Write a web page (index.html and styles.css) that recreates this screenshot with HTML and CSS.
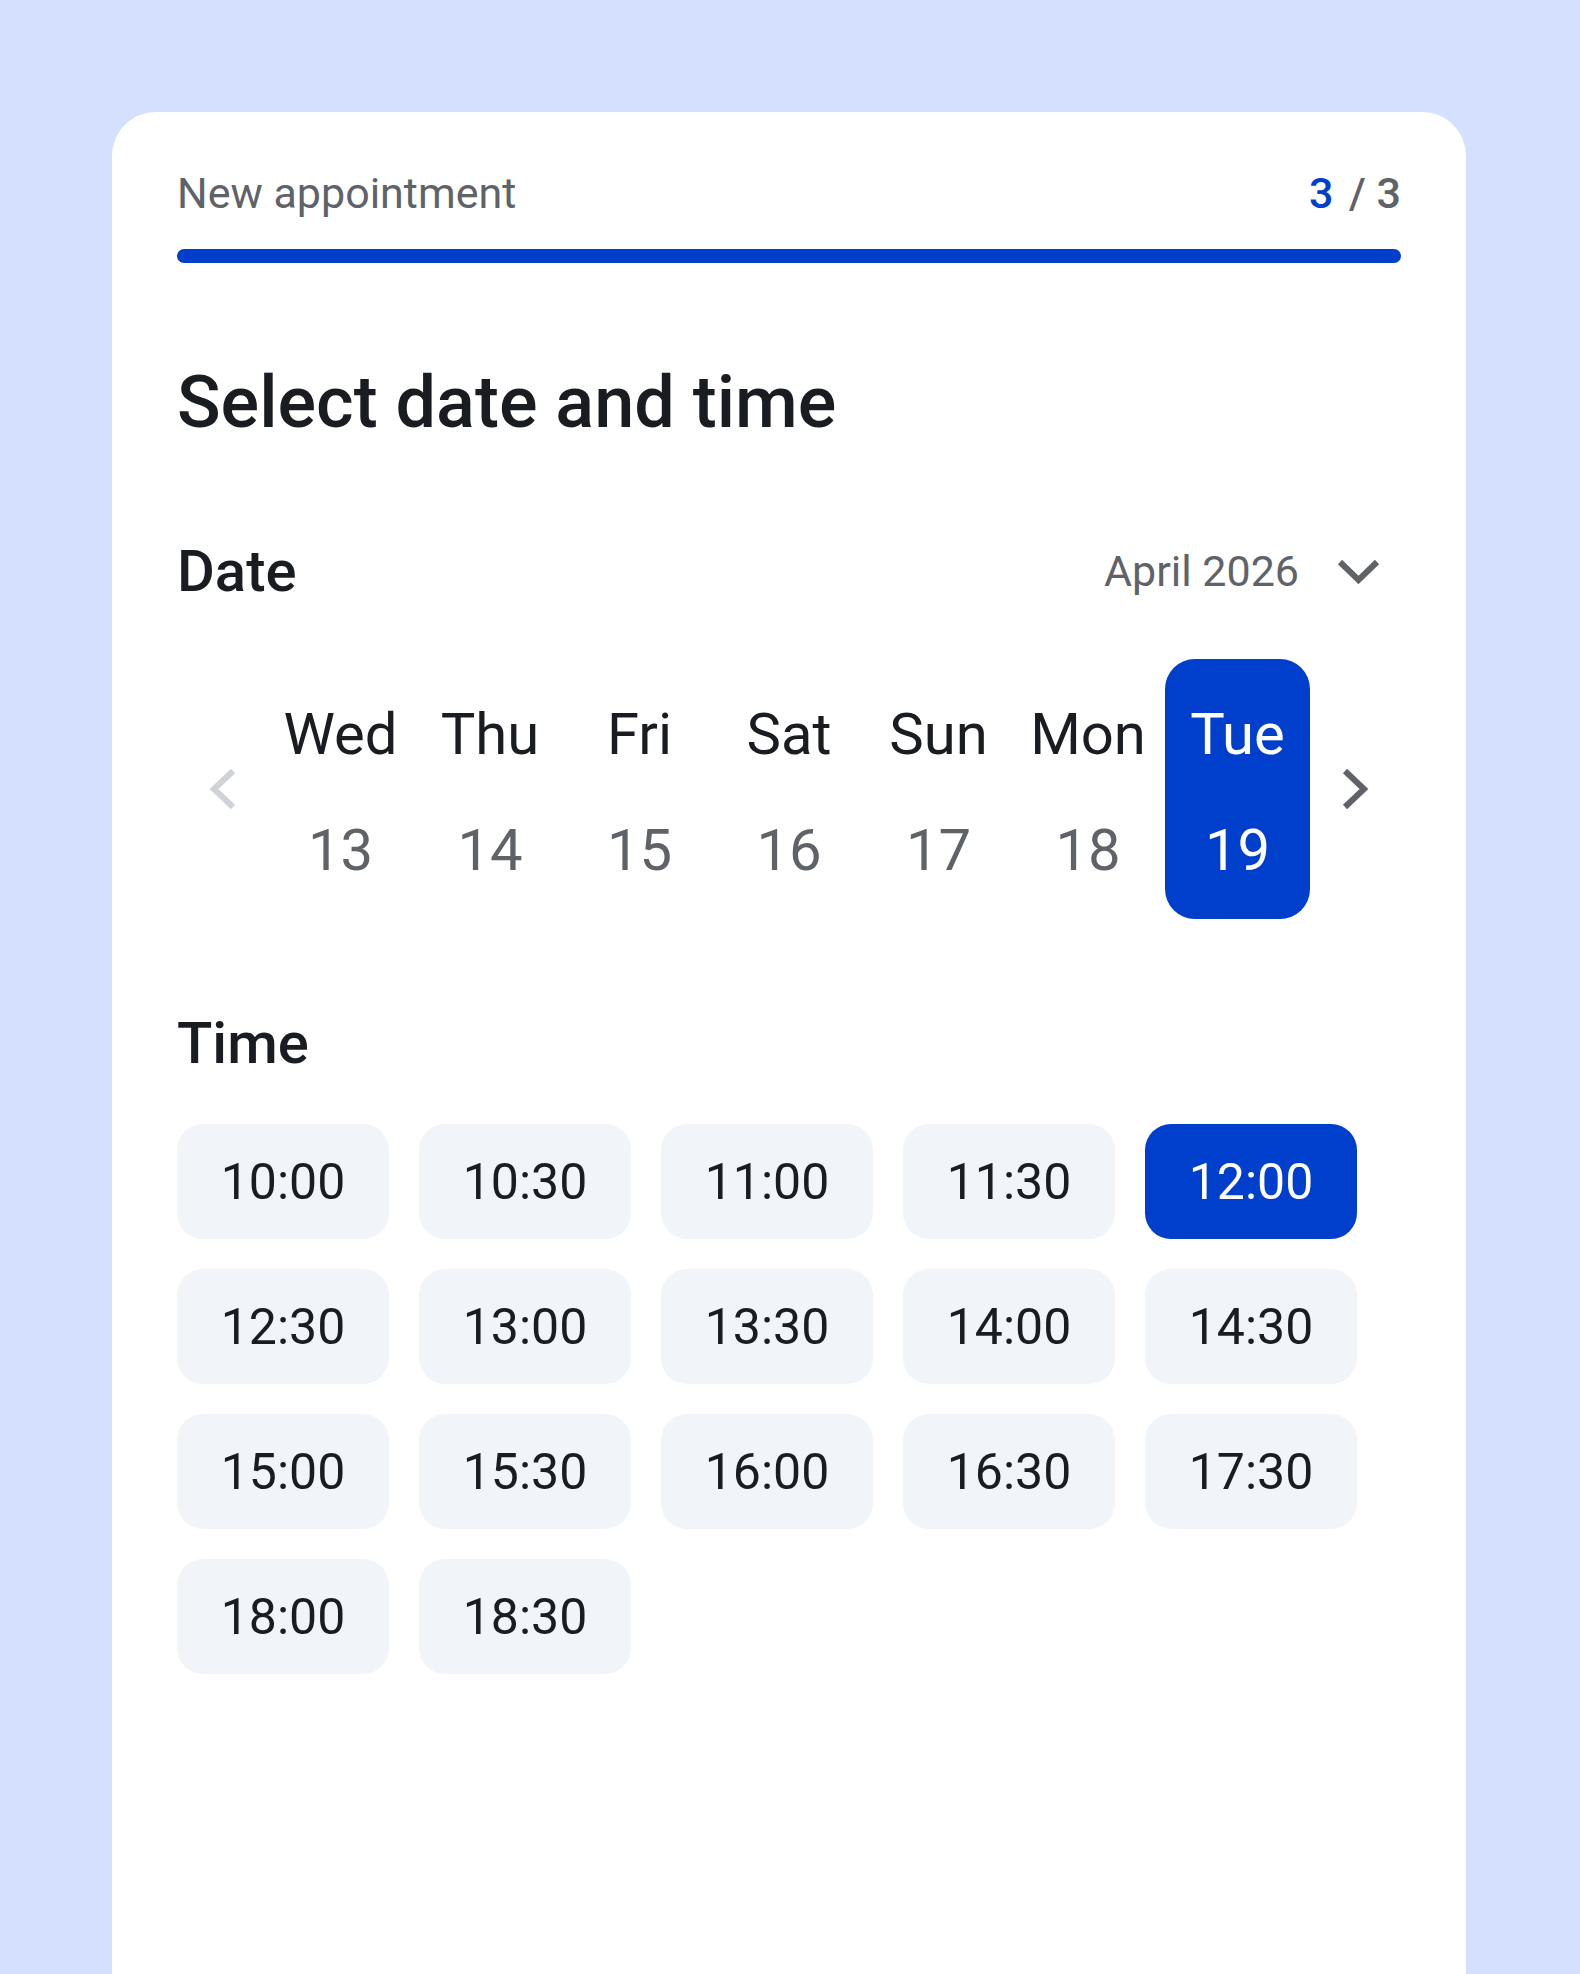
FILE: index.html
```html
<!DOCTYPE html>
<html lang="en">
<head>
    <meta charset="UTF-8">
    <meta name="viewport" content="width=device-width, initial-scale=1.0">
    <title>New appointment</title>
    <link rel="stylesheet" href="styles.css">
</head>
<body>
    <div class="page">
        <div class="card">
            <div class="steps">
                <span class="steps-title">New appointment</span>
                <span class="steps-count"><span class="steps-current">3</span> / 3</span>
            </div>
            <div class="progress"></div>

            <h1>Select date and time</h1>

            <div class="section-head">
                <h2>Date</h2>
                <button class="month" type="button">
                    April 2026
                    <svg width="43" height="26" viewBox="0 0 43 26"><polyline points="3,4 21.5,22 40,4" fill="none" stroke="currentColor" stroke-width="6"/></svg>
                </button>
            </div>

            <div class="days">
                <button class="nav nav-prev" type="button">
                    <svg width="29" height="42" viewBox="0 0 29 42"><polyline points="25,3 6,21 25,39" fill="none" stroke="currentColor" stroke-width="6"/></svg>
                </button>
                <div class="day-list">
                    <div class="day"><span class="day-name">Wed</span><span class="day-num">13</span></div>
                    <div class="day"><span class="day-name">Thu</span><span class="day-num">14</span></div>
                    <div class="day"><span class="day-name">Fri</span><span class="day-num">15</span></div>
                    <div class="day"><span class="day-name">Sat</span><span class="day-num">16</span></div>
                    <div class="day"><span class="day-name">Sun</span><span class="day-num">17</span></div>
                    <div class="day"><span class="day-name">Mon</span><span class="day-num">18</span></div>
                    <div class="day is-selected"><span class="day-name">Tue</span><span class="day-num">19</span></div>
                </div>
                <button class="nav nav-next" type="button">
                    <svg width="29" height="42" viewBox="0 0 29 42"><polyline points="4,3 23,21 4,39" fill="none" stroke="currentColor" stroke-width="6"/></svg>
                </button>
            </div>

            <h2 class="time-title">Time</h2>
            <div class="slots">
                <button class="slot" type="button">10:00</button>
                <button class="slot" type="button">10:30</button>
                <button class="slot" type="button">11:00</button>
                <button class="slot" type="button">11:30</button>
                <button class="slot is-selected" type="button">12:00</button>
                <button class="slot" type="button">12:30</button>
                <button class="slot" type="button">13:00</button>
                <button class="slot" type="button">13:30</button>
                <button class="slot" type="button">14:00</button>
                <button class="slot" type="button">14:30</button>
                <button class="slot" type="button">15:00</button>
                <button class="slot" type="button">15:30</button>
                <button class="slot" type="button">16:00</button>
                <button class="slot" type="button">16:30</button>
                <button class="slot" type="button">17:30</button>
                <button class="slot" type="button">18:00</button>
                <button class="slot" type="button">18:30</button>
            </div>
        </div>
    </div>
</body>
</html>
```

FILE: styles.css
```css
body {
    margin: 0;
    background-color: #d4e0fd;
    font-family: Roboto, "Liberation Sans", sans-serif;
    color: #191c20;
}
button {
    font-family: inherit;
    border: 0;
    background: none;
    padding: 0;
    cursor: pointer;
}
.page {
    height: 1974px;
    overflow: hidden;
    padding: 112px 114px 0 112px;
    box-sizing: border-box;
}
.card {
    background-color: #fff;
    border-radius: 44px 44px 0 0;
    padding: 56px 65px 0;
    min-height: 1862px;
    box-sizing: border-box;
}
.steps {
    display: flex;
    justify-content: space-between;
    font-size: 43px;
    line-height: 50px;
    color: #5f6368;
}
.steps-count {
    font-weight: 500;
}
.steps-current {
    color: #003ecc;
    margin-right: 5px;
}
.progress {
    margin-top: 31px;
    height: 14px;
    border-radius: 7px;
    background-color: #003ecc;
}
h1 {
    margin: 97px 0 0;
    font-size: 72px;
    line-height: 86px;
    font-weight: 500;
}
h2 {
    margin: 0;
    font-size: 58px;
    line-height: 64px;
    font-weight: 500;
}
.section-head {
    margin-top: 93px;
    display: flex;
    justify-content: space-between;
    align-items: center;
}
.month {
    display: flex;
    align-items: center;
    gap: 38px;
    padding-right: 21px;
    font-size: 43px;
    line-height: 50px;
    color: #5f6368;
}
.days {
    margin-top: 56px;
    display: flex;
    align-items: center;
}
.nav {
    flex: 1;
    display: flex;
    justify-content: center;
    color: #5f6368;
}
.nav-prev {
    color: #cfd3d8;
}
.day-list {
    display: flex;
    gap: 4.5px;
}
.day {
    width: 145px;
    display: flex;
    flex-direction: column;
    align-items: center;
    padding: 43px 0 37px;
    border-radius: 30px;
    font-size: 58px;
    line-height: 64px;
}
.day-num {
    margin-top: 52px;
    color: #5f6368;
}
.day.is-selected {
    background-color: #003ecc;
    color: #fff;
}
.day.is-selected .day-num {
    color: #fff;
}
.time-title {
    margin-top: 92px;
}
.slots {
    margin-top: 49px;
    display: grid;
    grid-template-columns: repeat(5, 212px);
    gap: 30px;
}
.slot {
    height: 115px;
    border-radius: 26px;
    background-color: #f1f4f9;
    font-size: 50px;
    color: #191c20;
}
.slot.is-selected {
    background-color: #003ecc;
    color: #fff;
}
```
